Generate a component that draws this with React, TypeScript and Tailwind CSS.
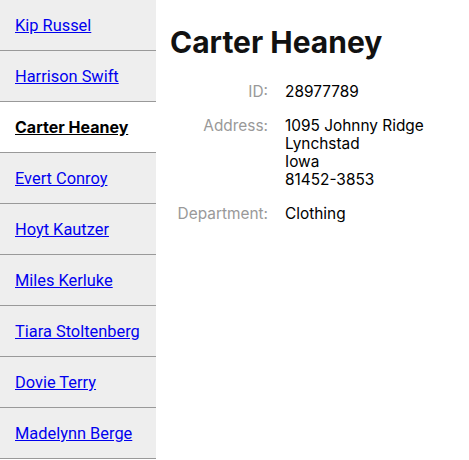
import React from 'react';

const PEOPLE = [
  'Kip Russel',
  'Harrison Swift',
  'Carter Heaney',
  'Evert Conroy',
  'Hoyt Kautzer',
  'Miles Kerluke',
  'Tiara Stoltenberg',
  'Dovie Terry',
  'Madelynn Berge',
];

const ACTIVE = 'Carter Heaney';

const App: React.FC = () => {
  return (
    <div className="flex min-h-[460px] bg-white font-['Inter',sans-serif]">
      <ul className="w-[156px] shrink-0 self-start bg-[#eeeeee]">
        {PEOPLE.map((name) => (
          <li
            key={name}
            className={`h-[51px] whitespace-nowrap border-b border-[#999999] px-[15px] pt-[15px] leading-[20px] ${
              name === ACTIVE ? 'bg-white' : ''
            }`}
          >
            <a
              href="#"
              className={
                name === ACTIVE
                  ? "font-['Inter',sans-serif] text-[16px] font-bold text-black underline"
                  : "font-['Roboto',sans-serif] text-[16.4px] text-[#0000ee] underline"
              }
            >
              {name}
            </a>
          </li>
        ))}
      </ul>
      <div className="flex-1 px-[14px] pt-[24px]">
        <h1 className="text-[30px] font-bold leading-[36px] text-[#111111]">Carter Heaney</h1>
        <dl className="mt-[23px] grid grid-cols-[98px_1fr] gap-x-[17px] gap-y-[16px] text-[15.4px] leading-[18px]">
          <dt className="text-right text-[#999999]">ID:</dt>
          <dd className="text-black">28977789</dd>
          <dt className="text-right text-[#999999]">Address:</dt>
          <dd className="text-black">
            1095 Johnny Ridge
            <br />
            Lynchstad
            <br />
            Iowa
            <br />
            81452-3853
          </dd>
          <dt className="text-right text-[#999999]">Department:</dt>
          <dd className="text-black">Clothing</dd>
        </dl>
      </div>
    </div>
  );
};

export default App;
